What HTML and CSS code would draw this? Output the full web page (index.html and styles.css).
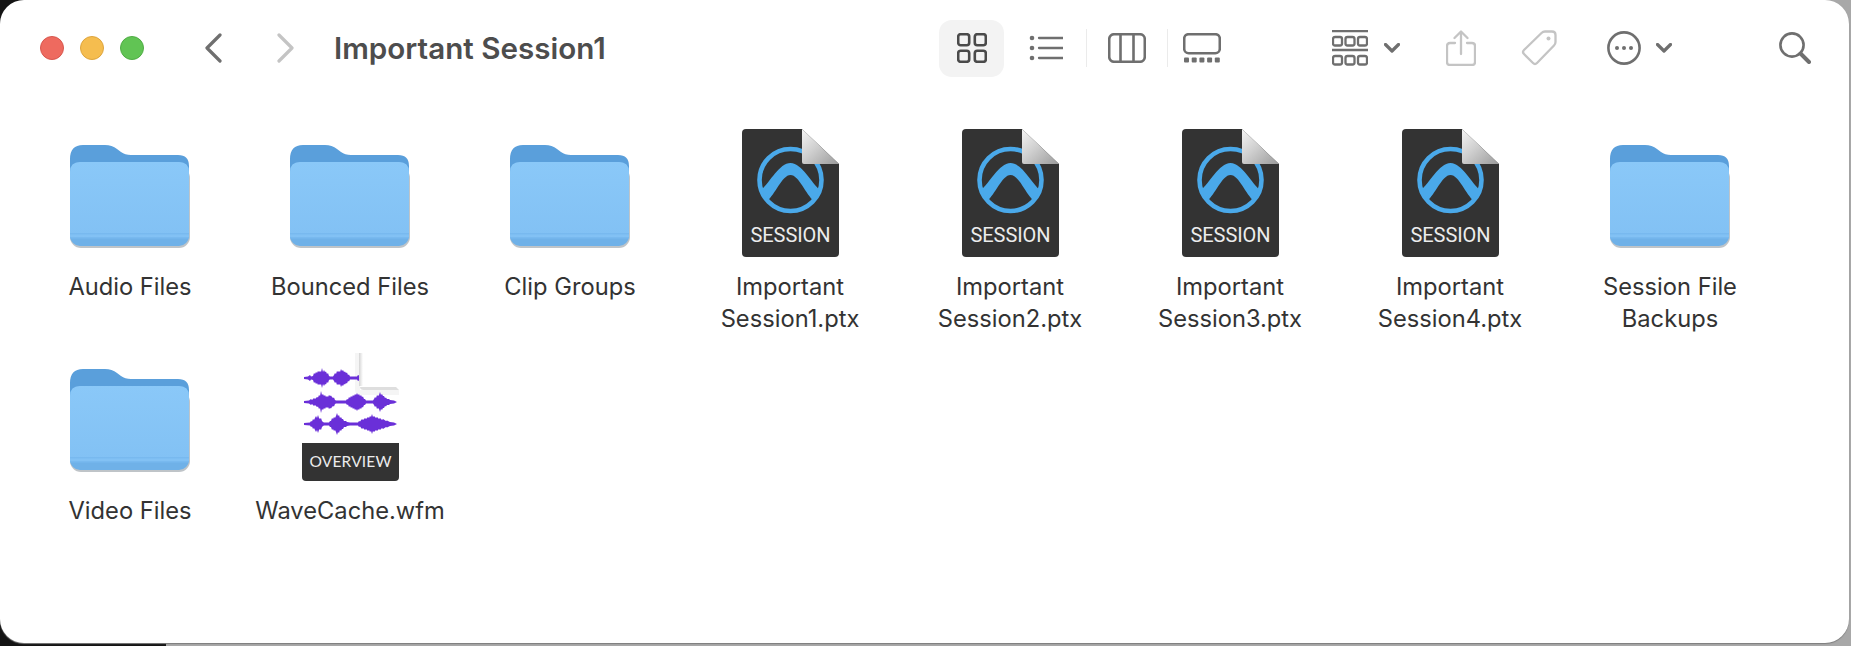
FILE: index.html
```html
<!DOCTYPE html>
<html lang="en">
<head>
    <meta charset="UTF-8">
    <title>Important Session1</title>
    <link rel="stylesheet" href="styles.css">
</head>
<body>
    <svg class="defs" width="0" height="0">
        <defs>
            <linearGradient id="foldGray" x1="0" y1="0" x2="1" y2="1">
                <stop offset="0" stop-color="#f4f4f4"/>
                <stop offset="0.45" stop-color="#cfcfcf"/>
                <stop offset="1" stop-color="#9a9a9a"/>
            </linearGradient>
            <linearGradient id="foldShadow" x1="0" y1="0" x2="1" y2="0">
                <stop offset="0" stop-color="#d4d4d4"/>
                <stop offset="1" stop-color="#ffffff"/>
            </linearGradient>
            <linearGradient id="folderFront" x1="0" y1="0" x2="0" y2="1">
                <stop offset="0" stop-color="#8ac8f8"/>
                <stop offset="1" stop-color="#82c1f4"/>
            </linearGradient>

            <symbol id="folder" viewBox="0 0 120 104">
                <rect x="0" y="22" width="120" height="81" rx="11" fill="#56636e" opacity="0.38"/>
                <path d="M0 14Q0 0 13 0H35Q42 0 47 4L51 7Q55 10 61 10H108Q119 10 119 21V40H0Z" fill="#5a9fdb"/>
                <rect x="0" y="17" width="119" height="84" rx="10" fill="#6fb1e8"/>
                <path d="M0 27Q0 17 10 17H109Q119 17 119 27V92H0Z" fill="url(#folderFront)"/>
                <path d="M0 88H119V89.5H0ZM0 92H119V93.5H0Z" fill="#78b9ef"/>
            </symbol>

            <symbol id="session" viewBox="0 0 97 128">
                <path d="M4 0H60L97 35V124Q97 128 93 128H4Q0 128 0 124V4Q0 0 4 0Z" fill="#333"/>
                <circle cx="48.5" cy="51" r="31" fill="none" stroke="#4aa9ea" stroke-width="4.6"/>
                <path d="M19 61C27 55 37 34 48.5 34C60 34 70 55 78 61L72 72C64 66 57 46 48.5 46C40 46 33 66 25 72Z" fill="#4aa9ea"/>
                <path d="M60 0L97 35H62Q60 35 60 33Z" fill="url(#foldGray)"/>
                <text x="48.5" y="113" text-anchor="middle" textLength="80" class="doc-label session-label">SESSION</text>
            </symbol>

            <path id="waveA" d="M2 0V-1L6 -1.5 8 -3 9 -1.5 11 -2 12 -5 13 -4 14 -6 15 -5 16 -7 17 -6 18 -7 19 -6 20 -10 21 -6 22 -8 23 -6 24 -6.5 25 -4 26 -5 27 -2 28 -1.5H31L32 -3 33 -5 34 -4 35 -7 36 -6 37 -7 38 -6 39 -9 40 -7 41 -8 42 -6 43 -6.5 44 -5 45 -5.5 46 -3 47 -3.5 48 -1.5H55L56 -3 57 -2.5 58 -5 59 -4 60 -7V0Z"/>
            <path id="waveB" d="M2 0V-1L7 -1.5 9 -3 10 -2 12 -4 13 -3 15 -5 16 -4.5 17 -7 18 -6 19 -11 20 -7 21 -8 22 -6 23 -7 24 -5 25 -6 26 -5 27 -7 28 -6 29 -6.5 30 -5 31 -4 32 -4.5 33 -2 34 -1.5H44L45 -3 46 -2.5 47 -5 48 -4 49 -6 50 -5 51 -7 52 -6 53 -8 54 -7 55 -9 56 -7 57 -8 58 -6 59 -7 60 -5 61 -5.5 62 -3 63 -3 64 -1.5H71L72 -3 73 -5 74 -4 75 -7 76 -6 77 -7 78 -10 79 -7 80 -8 81 -6 82 -6 83 -4 84 -4.5 85 -3 87 -3 88 -2 92 -1.5 95 0Z"/>
            <path id="waveC" d="M2 0V-1L8 -1.5 9 -3 10 -2.5 11 -5 12 -4 13 -6 14 -8 15 -6 16 -9 17 -6 18 -5 19 -6 20 -3 21 -2 22 -1.5H27L28 -3 29 -3 30 -6 31 -5 32 -7 33 -6 34 -8 35 -11 36 -8 37 -9 38 -6 39 -7 40 -5 41 -5 42 -3 44 -3 45 -2 48 -1.5H56L57 -3 58 -2.5 60 -5 61 -4 63 -6 64 -5 66 -7 67 -6 68 -8 69 -7 70 -10 71 -7 72 -8 74 -6 75 -7 77 -5 78 -6 80 -4 81 -5 84 -3 85 -3.5 88 -2 92 -1.5 95 0Z"/>

            <symbol id="overview" viewBox="0 0 97 128">
                <path d="M58 0V37H97V42H58Q53 42 53 37V0Z" fill="#000" opacity="0.04"/>
                <g fill="#6a2fd8">
                    <g transform="translate(0 25)"><use href="#waveA"/><use href="#waveA" transform="scale(1 -1)"/></g>
                    <g transform="translate(0 49)"><use href="#waveB"/><use href="#waveB" transform="scale(1 -1)"/></g>
                    <g transform="translate(0 71)"><use href="#waveC"/><use href="#waveC" transform="scale(1 -1)"/></g>
                </g>
                <path d="M60 0H97V35H60Z" fill="#fff"/>
                <path d="M57 0H61V33H57Z" fill="url(#foldShadow)"/>
                <path d="M60 34H94L97 37H62Q58 37 58 34Z" fill="#dedede"/>
                <path d="M0 90H97V124Q97 128 93 128H4Q0 128 0 124Z" fill="#333"/>
                <text x="48.5" y="114" text-anchor="middle" textLength="82" class="doc-label overview-label">OVERVIEW</text>
            </symbol>
        </defs>
    </svg>

    <div class="window">
        <header class="toolbar">
            <div class="lights">
                <span class="light red"></span>
                <span class="light yellow"></span>
                <span class="light green"></span>
            </div>
            <svg class="nav-back" width="18" height="30" viewBox="0 0 18 30"><path d="M16 2L3 15L16 28" class="line mid bold"/></svg>
            <svg class="nav-forward" width="19" height="30" viewBox="0 0 19 30"><path d="M3 2L16 15L3 28" class="line faint bold"/></svg>
            <h1 class="title">Important Session1</h1>

            <div class="views">
                <div class="view-active">
                    <svg width="30" height="30" viewBox="0 0 30 30">
                        <g class="line dark">
                            <rect x="1.2" y="1.2" width="11" height="11" rx="2.5"/>
                            <rect x="17.8" y="1.2" width="11" height="11" rx="2.5"/>
                            <rect x="1.2" y="17.8" width="11" height="11" rx="2.5"/>
                            <rect x="17.8" y="17.8" width="11" height="11" rx="2.5"/>
                        </g>
                    </svg>
                </div>
                <svg class="icon-list" width="34" height="26" viewBox="0 0 34 26">
                    <g class="fill-mid">
                        <circle cx="3" cy="3" r="2.3"/><circle cx="3" cy="13" r="2.3"/><circle cx="3" cy="23" r="2.3"/>
                    </g>
                    <path d="M10 3H34M10 13H34M10 23H34" class="line mid thin"/>
                </svg>
                <span class="sep sep-first"></span>
                <svg class="icon-columns" width="38" height="30" viewBox="0 0 38 30">
                    <g class="line mid">
                        <rect x="1.2" y="1.2" width="35.6" height="27.6" rx="5"/>
                        <path d="M12.5 1.2V28.8M25.5 1.2V28.8"/>
                    </g>
                </svg>
                <span class="sep sep-second"></span>
                <svg class="icon-gallery" width="38" height="30" viewBox="0 0 38 30">
                    <rect x="1.2" y="1.2" width="35.6" height="19" rx="4.5" class="line mid"/>
                    <g class="fill-mid">
                        <rect x="1" y="24.5" width="5" height="5" rx="1"/><rect x="8.7" y="24.5" width="5" height="5" rx="1"/><rect x="16.4" y="24.5" width="5" height="5" rx="1"/><rect x="24.1" y="24.5" width="5" height="5" rx="1"/><rect x="31.8" y="24.5" width="5" height="5" rx="1"/>
                    </g>
                </svg>
            </div>

            <svg class="icon-group" width="36" height="36" viewBox="0 0 36 36">
                <path d="M0 1.2H36M0 20H36" class="line mid thin"/>
                <g class="line mid thin">
                    <rect x="1" y="7" width="9" height="8.5" rx="2"/><rect x="13.5" y="7" width="9" height="8.5" rx="2"/><rect x="26" y="7" width="9" height="8.5" rx="2"/>
                    <rect x="1" y="26" width="9" height="8.5" rx="2"/><rect x="13.5" y="26" width="9" height="8.5" rx="2"/><rect x="26" y="26" width="9" height="8.5" rx="2"/>
                </g>
            </svg>
            <svg class="chevron chevron-group" width="16" height="10" viewBox="0 0 16 10"><path d="M1.5 1.5L8 8L14.5 1.5" class="line mid bold"/></svg>

            <svg class="icon-share" width="30" height="36" viewBox="0 0 30 36">
                <g class="line faint thin">
                    <path d="M9 13H4Q1 13 1 16V32Q1 35 4 35H26Q29 35 29 32V16Q29 13 26 13H21"/>
                    <path d="M15 24V2M8.5 8L15 1.5L21.5 8"/>
                </g>
            </svg>
            <svg class="icon-tag" width="36" height="36" viewBox="0 0 36 36">
                <path d="M24 1.5H31Q34.5 1.5 34.5 5V12Q34.5 14 33 15.5L16 33Q14 35 12 33L3 24Q1 22 3 20L20.5 3Q22 1.5 24 1.5Z" class="line faint thin"/>
                <circle cx="27.5" cy="8.5" r="2" class="fill-faint"/>
            </svg>
            <svg class="icon-more" width="34" height="34" viewBox="0 0 34 34">
                <circle cx="17" cy="17" r="15.6" class="line mid"/>
                <g class="fill-mid"><circle cx="10" cy="17" r="2"/><circle cx="17" cy="17" r="2"/><circle cx="24" cy="17" r="2"/></g>
            </svg>
            <svg class="chevron chevron-more" width="16" height="10" viewBox="0 0 16 10"><path d="M1.5 1.5L8 8L14.5 1.5" class="line mid bold"/></svg>
            <svg class="icon-search" width="32" height="32" viewBox="0 0 32 32">
                <circle cx="13" cy="13" r="11.6" class="line mid"/>
                <path d="M21.5 21.5L30 30" class="line mid heavy"/>
            </svg>
        </header>

        <main class="files">
            <div class="file">
                <div class="thumb"><svg class="folder-icon" width="120" height="104"><use href="#folder"/></svg></div>
                <div class="name">Audio Files</div>
            </div>
            <div class="file">
                <div class="thumb"><svg class="folder-icon" width="120" height="104"><use href="#folder"/></svg></div>
                <div class="name">Bounced Files</div>
            </div>
            <div class="file">
                <div class="thumb"><svg class="folder-icon" width="120" height="104"><use href="#folder"/></svg></div>
                <div class="name">Clip Groups</div>
            </div>
            <div class="file">
                <div class="thumb"><svg width="97" height="128"><use href="#session"/></svg></div>
                <div class="name">Important Session1.ptx</div>
            </div>
            <div class="file">
                <div class="thumb"><svg width="97" height="128"><use href="#session"/></svg></div>
                <div class="name">Important Session2.ptx</div>
            </div>
            <div class="file">
                <div class="thumb"><svg width="97" height="128"><use href="#session"/></svg></div>
                <div class="name">Important Session3.ptx</div>
            </div>
            <div class="file">
                <div class="thumb"><svg width="97" height="128"><use href="#session"/></svg></div>
                <div class="name">Important Session4.ptx</div>
            </div>
            <div class="file">
                <div class="thumb"><svg class="folder-icon" width="120" height="104"><use href="#folder"/></svg></div>
                <div class="name">Session File Backups</div>
            </div>
            <div class="file">
                <div class="thumb"><svg class="folder-icon" width="120" height="104"><use href="#folder"/></svg></div>
                <div class="name">Video Files</div>
            </div>
            <div class="file">
                <div class="thumb"><svg width="97" height="128"><use href="#overview"/></svg></div>
                <div class="name">WaveCache.wfm</div>
            </div>
        </main>
    </div>
</body>
</html>
```

FILE: styles.css
```css
/* Reset */
* {
    margin: 0;
    padding: 0;
    box-sizing: border-box;
}

html, body {
    height: 100%;
    overflow: hidden;
}

/* Desktop behind the window: dark dock edge on the left, grey on the right */
body {
    font-family: 'Inter', 'Liberation Sans', sans-serif;
    background: linear-gradient(to right, #141414 166px, #a8a8a8 166px);
}

.defs {
    display: block;
    height: 0;
}

.window {
    width: 1849px;
    height: 643px;
    background-color: #fff;
    border-radius: 24px;
    box-shadow: 0 1px 1px #7d7d7d;
}

/* Toolbar */
.toolbar {
    display: flex;
    align-items: center;
    height: 96px;
    padding-left: 40px;
}

.lights {
    display: flex;
    gap: 16px;
}

.light {
    width: 24px;
    height: 24px;
    border-radius: 50%;
}

.red { background-color: #ee6a5f; border: 1px solid #d8574e; }
.yellow { background-color: #f5bd4f; border: 1px solid #dea53e; }
.green { background-color: #61c454; border: 1px solid #50ad45; }

.nav-back { margin-left: 60px; }
.nav-forward { margin-left: 54px; }

.title {
    margin-left: 39px;
    font-size: 29.6px;
    font-weight: 600;
    color: #4d4d4d;
}

.views {
    display: flex;
    align-items: center;
    margin-left: auto;
}

.view-active {
    display: flex;
    align-items: center;
    justify-content: center;
    width: 65px;
    height: 57px;
    background-color: #f3f3f3;
    border-radius: 13px;
}

.icon-list { margin-left: 25px; }

.sep {
    width: 1px;
    height: 38px;
    background-color: #ebebeb;
}

.sep-first { margin: 0 21px 0 23px; }
.sep-second { margin: 0 15px 0 21px; }

.icon-group { margin-left: 111px; }
.chevron-group { margin-left: 16px; }
.icon-share { margin-left: 46px; }
.icon-tag { margin-left: 45px; }
.icon-more { margin-left: 50px; }
.chevron-more { margin-left: 15px; }
.icon-search { margin-left: 107px; margin-right: 38px; }

/* Icon strokes */
.line {
    fill: none;
    stroke-width: 2.6;
    stroke-linecap: round;
    stroke-linejoin: round;
}

.thin { stroke-width: 2.3; }
.bold { stroke-width: 3.2; }
.heavy { stroke-width: 4; }
.dark { stroke: #4a4a4a; }
.mid { stroke: #6f6f6f; }
.faint { stroke: #c4c4c4; }
.fill-mid { fill: #6f6f6f; }
.fill-faint { fill: #c4c4c4; }

/* File grid */
.files {
    display: grid;
    grid-template-columns: repeat(8, 220px);
    row-gap: 18px;
    padding: 33px 0 0 20px;
}

.file {
    display: flex;
    flex-direction: column;
    align-items: center;
}

.thumb {
    display: flex;
    align-items: center;
    justify-content: center;
    height: 128px;
}

.folder-icon {
    margin-top: 7px;
}

.name {
    width: 200px;
    margin-top: 14px;
    font-size: 23.7px;
    line-height: 32px;
    text-align: center;
    color: #333;
}

.doc-label {
    font-family: 'Roboto', 'Liberation Sans', sans-serif;
    fill: #ececec;
}

.session-label { font-size: 20px; }
.overview-label { font-family: 'Lato', sans-serif; font-size: 15.5px; }
```
